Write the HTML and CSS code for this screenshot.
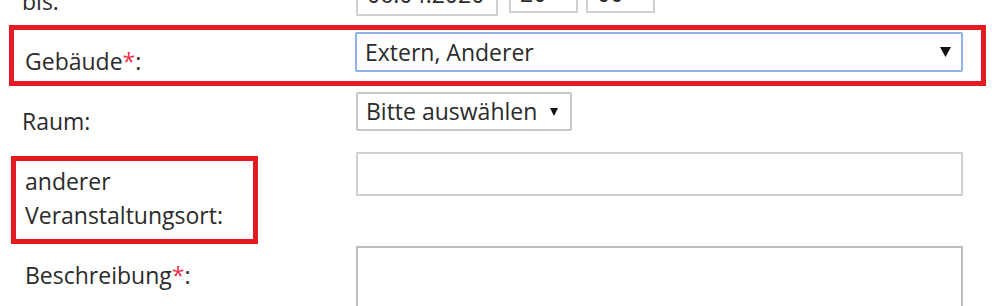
FILE: index.html
```html
<!DOCTYPE html>
<html lang="de">
<head>
<meta charset="utf-8">
<title>Veranstaltung</title>
<link rel="stylesheet" href="styles.css">
</head>
<body>
<form class="form">
  <div class="row">
    <label class="label">bis:</label>
    <div class="control control--inline">
      <input class="field field--date" type="text" value="06.04.2020">
      <input class="field field--time" type="text" value="20">
      <span class="sep">:</span>
      <input class="field field--time" type="text" value="00">
    </div>
  </div>

  <div class="row">
    <label class="label label--indent">Gebäude<span class="req">*</span>:</label>
    <div class="control">
      <div class="select select--wide select--focus" role="combobox">
        <span>Extern, Anderer</span>
        <svg class="arrow arrow--lg" viewBox="0 0 11 10"><path d="M0 0h11L5.5 10z"/></svg>
      </div>
    </div>
  </div>

  <div class="row">
    <label class="label">Raum:</label>
    <div class="control">
      <div class="select select--auto" role="combobox">
        <span>Bitte auswählen</span>
        <svg class="arrow" viewBox="0 0 8 8"><path d="M0 0h8L4 8z"/></svg>
      </div>
    </div>
  </div>

  <div class="row">
    <label class="label label--indent">anderer<br>Veranstaltungsort:</label>
    <div class="control">
      <input class="field field--wide" type="text" value="">
    </div>
  </div>

  <div class="row">
    <label class="label label--indent">Beschreibung<span class="req">*</span>:</label>
    <div class="control">
      <textarea class="field field--wide field--area"></textarea>
    </div>
  </div>

  <div class="mark mark--building"></div>
  <div class="mark mark--place"></div>
</form>
</body>
</html>
```

FILE: styles.css
```css
html, body {
  margin: 0;
  padding: 0;
  background: #fff;
  overflow: hidden;
}

body {
  font-family: "Open Sans", "DejaVu Sans", sans-serif;
  font-size: 23px;
  color: #2b2b2b;
}

.form {
  position: relative;
  margin-top: -28px;
  display: flex;
  flex-direction: column;
  gap: 14px;
}

.row {
  display: grid;
  grid-template-columns: 356px 1fr;
  align-items: start;
}

.label {
  padding: 12px 0 0 22px;
  line-height: 34px;
}

.label--indent {
  padding-left: 25px;
}

.req {
  color: #f0304a;
}

.control {
  display: flex;
}

.control--inline {
  align-items: flex-start;
}

.field {
  box-sizing: border-box;
  font: inherit;
  color: #2b2b2b;
  background: #fff;
  border: 2px solid #d0d0d0;
  padding: 0 9px;
  margin: 0;
  outline: none;
}

.field--date {
  width: 142px;
  height: 44px;
  margin-right: 11px;
}

.field--time {
  width: 69px;
  height: 41px;
}

.sep {
  width: 8px;
  line-height: 22px;
  text-align: center;
  color: #2b2b2b;
}

.field--wide {
  width: 607px;
  height: 44px;
}

.field--area {
  height: 120px;
  resize: none;
  border-color: #bdbdbd;
}

.select {
  box-sizing: border-box;
  display: flex;
  align-items: center;
  justify-content: space-between;
  border: 2px solid #c8c8c8;
  border-radius: 2px;
  background: #fff;
  padding: 0 12px 0 8px;
  line-height: 1;
}

.select--wide {
  width: 608px;
  height: 40px;
  margin-left: -1px;
  padding-right: 10px;
}

.select--focus {
  border-color: #8fb2e6;
}

.select--auto {
  height: 39px;
  gap: 13px;
}

.arrow {
  width: 8px;
  height: 8px;
  fill: #111;
  flex: none;
}

.arrow--lg {
  width: 11px;
  height: 10px;
}

/* red annotation frames drawn over the form */
.mark {
  position: absolute;
  box-sizing: border-box;
  border: 5px solid #e31b23;
  pointer-events: none;
}

.mark--building {
  left: 9px;
  top: 53px;
  width: 977px;
  height: 61px;
}

.mark--place {
  left: 11px;
  top: 184px;
  width: 247px;
  height: 88px;
}
```
